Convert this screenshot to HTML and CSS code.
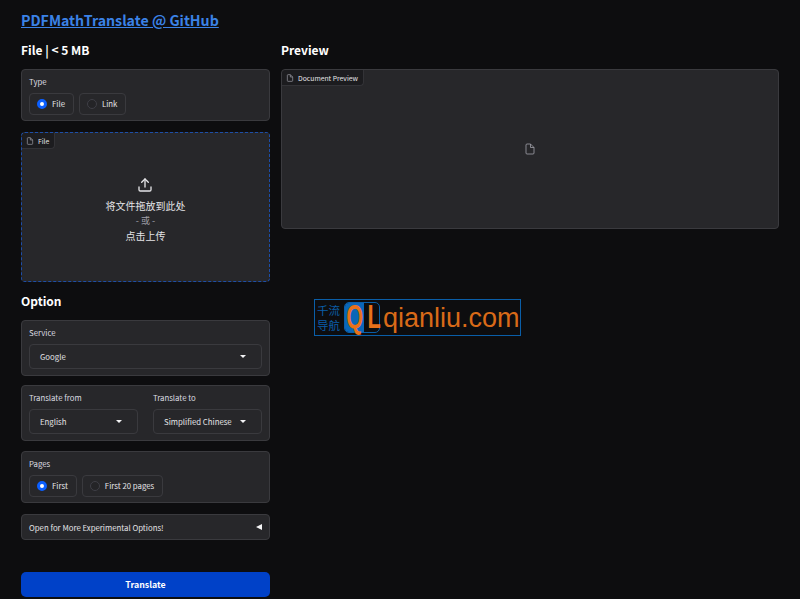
FILE: index.html
```html
<!DOCTYPE html>
<html lang="en">
<head>
<meta charset="utf-8">
<title>PDFMathTranslate</title>
<link rel="stylesheet" href="styles.css">
</head>
<body>
<main class="app">
  <h1 class="title"><a href="#">PDFMathTranslate @ GitHub</a></h1>
  <div class="columns">
    <section class="left">
      <h2 class="heading">File | &lt; 5 MB</h2>
      <div class="panel">
        <div class="label">Type</div>
        <div class="radios">
          <div class="radio"><span class="dot on"></span>File</div>
          <div class="radio"><span class="dot"></span>Link</div>
        </div>
      </div>
      <div class="drop">
        <div class="tag"><svg class="file-icon" viewBox="0 0 24 24"><path d="M13 2H6a2 2 0 0 0-2 2v16a2 2 0 0 0 2 2h12a2 2 0 0 0 2-2V9z"/><path d="M13 2v7h7"/></svg>File</div>
        <svg class="upload" viewBox="0 0 24 24"><path d="M21 15v4a2 2 0 0 1-2 2H5a2 2 0 0 1-2-2v-4"/><path d="M17 8l-5-5-5 5"/><path d="M12 3v12"/></svg>
        <div class="drop-line">将文件拖放到此处</div>
        <div class="drop-or">- 或 -</div>
        <div class="drop-line">点击上传</div>
      </div>
      <h2 class="heading option">Option</h2>
      <div class="panel select-panel tight">
        <div class="label">Service</div>
        <div class="select"><span>Google</span><i class="caret"></i></div>
      </div>
      <div class="panel select-panel two">
        <div class="field">
          <div class="label">Translate from</div>
          <div class="select"><span>English</span><i class="caret"></i></div>
        </div>
        <div class="field">
          <div class="label">Translate to</div>
          <div class="select"><span>Simplified Chinese</span><i class="caret"></i></div>
        </div>
      </div>
      <div class="panel">
        <div class="label">Pages</div>
        <div class="radios">
          <div class="radio"><span class="dot on"></span>First</div>
          <div class="radio"><span class="dot"></span>First 20 pages</div>
        </div>
      </div>
      <div class="accordion"><span>Open for More Experimental Options!</span><span class="arrow"></span></div>
      <button class="translate">Translate</button>
    </section>
    <section class="right">
      <h2 class="heading">Preview</h2>
      <div class="preview">
        <div class="tag"><svg class="file-icon" viewBox="0 0 24 24"><path d="M13 2H6a2 2 0 0 0-2 2v16a2 2 0 0 0 2 2h12a2 2 0 0 0 2-2V9z"/><path d="M13 2v7h7"/></svg>Document Preview</div>
        <svg class="preview-icon" viewBox="0 0 24 24"><path d="M13 2H6a2 2 0 0 0-2 2v16a2 2 0 0 0 2 2h12a2 2 0 0 0 2-2V9z"/><path d="M13 2v7h7"/></svg>
      </div>
    </section>
  </div>
</main>
<div class="watermark">
  <div class="wm-cn">千流<br>导航</div>
  <div class="wm-badge"><span class="wm-q"><b class="wm-glyph">Q</b></span><span class="wm-l"><b class="wm-glyph">L</b></span></div>
  <div class="wm-text">qianliu.com</div>
</div>
</body>
</html>
```
FILE: styles.css
```css
* { box-sizing: border-box; }
html, body { margin: 0; height: 599px; overflow: hidden; }
body {
  background: #0d0d0f;
  color: #f3f4f6;
  font-family: "Noto Sans CJK SC", "Noto Sans", sans-serif;
  font-size: 8px;
  position: relative;
}
.app { padding: 10px 21px 0; }
.title { margin: 0; font-size: 14.2px; line-height: 20px; font-weight: 700; }
.title a { color: #3b82e6; text-decoration: underline; }
.columns { display: grid; grid-template-columns: 249px 498px; gap: 11px; margin-top: 10px; }
.heading { margin: 0 0 10px; font-size: 12px; line-height: 19px; font-weight: 700; color: #fff; }
.heading.option { margin: 9px 0 10px; }
.panel {
  background: #27272a;
  border: 1px solid #3a3a3e;
  border-radius: 4px;
  padding: 5.5px 7px 5.5px;
  margin-bottom: 10px;
}
.label { font-size: 7.8px; line-height: 12px; color: #dcdce0; margin-bottom: 5px; }
.radios { display: flex; gap: 5px; }
.radio {
  display: flex;
  align-items: center;
  gap: 5px;
  height: 22px;
  padding: 0 8px 0 7px;
  border: 1px solid #3a3a3e;
  border-radius: 4px;
  font-size: 7.8px;
  color: #e4e4e7;
}
.dot { width: 10px; height: 10px; border-radius: 50%; background: #242427; border: 1px solid #3f3f46; flex: none; }
.dot.on { background: #fff; border: 3px solid #0b5fff; }
.drop, .preview {
  position: relative;
  background: #27272a;
  border-radius: 4px;
  display: flex;
  flex-direction: column;
  align-items: center;
}
.drop { height: 150px; margin-top: 11px; border: 1px dashed #1d4ea8; padding-top: 44px; }
.preview { height: 160px; border: 1px solid #3a3a3e; justify-content: center; }
.tag {
  position: absolute;
  top: 0; left: 0;
  display: flex;
  align-items: center;
  gap: 4px;
  height: 16px;
  padding: 0 5px 0 4px;
  background: #1c1c1f;
  border: 1px solid #333337;
  border-width: 0 1px 1px 0;
  border-radius: 4px 0 4px 0;
  font-size: 6.8px;
  color: #e4e4e7;
}
.file-icon { width: 8px; height: 8px; fill: none; stroke: #a1a1aa; stroke-width: 2; }
.upload { width: 16px; height: 16px; fill: none; stroke: #e4e4e7; stroke-width: 2; stroke-linecap: round; stroke-linejoin: round; margin: 0 0 4.5px -1px; }
.drop-line { font-size: 10px; line-height: 15px; color: #e4e4e7; }
.drop-or { font-size: 9px; line-height: 15px; color: #a1a1aa; }
.preview-icon { width: 12px; height: 12px; fill: none; stroke: #a1a1aa; stroke-width: 1.6; }
.select-panel { padding-bottom: 6.5px; }
.tight { margin-bottom: 9px; }
.select {
  display: flex;
  align-items: center;
  justify-content: space-between;
  height: 25px;
  padding: 0 15px 0 10px;
  border: 1px solid #3a3a3e;
  border-radius: 4px;
  font-size: 7.8px;
  color: #e4e4e7;
  white-space: nowrap;
}
.caret { width: 0; height: 0; border: 3px solid transparent; border-top: 3px solid #f4f4f5; border-bottom: 0; }
.two { display: grid; grid-template-columns: 1fr 1fr; gap: 15px; }
.accordion {
  display: flex;
  align-items: center;
  justify-content: space-between;
  height: 26px;
  margin-top: 11px;
  padding: 0 7px;
  background: #27272a;
  border: 1px solid #3a3a3e;
  border-radius: 4px;
  font-size: 7.8px;
  color: #e4e4e7;
}
.arrow { width: 0; height: 0; border: 3px solid transparent; border-right: 6px solid #f4f4f5; border-left: 0; }
.translate {
  display: block;
  width: 100%;
  height: 25px;
  margin-top: 32px;
  background: #0041c8;
  border: 0;
  border-radius: 5px;
  font: 700 8.8px "Noto Sans CJK SC", sans-serif;
  color: #fff;
}
.watermark {
  position: absolute;
  left: 314px;
  top: 299px;
  width: 207px;
  height: 37px;
  display: flex;
  align-items: center;
  border: 1px solid #0a5ea8;
  padding-left: 2px;
}
.wm-cn { width: 27px; font-size: 11.5px; line-height: 15px; color: #0a5ea8; }
.wm-badge { display: flex; flex: none; width: 36px; height: 31px; border: 1px solid #0a5ea8; border-radius: 5px; font: 700 33px/28px "Liberation Sans", sans-serif; color: #e8711a; }
.wm-q { display: flex; justify-content: center; width: 19px; background: #0a66b8; border-radius: 4px 0 0 4px; }
.wm-l { display: flex; justify-content: center; flex: 1; }
.wm-glyph { display: block; font-weight: 700; transform: scaleX(.66); }
.wm-text { margin-left: 3px; font: 27px/30px "Liberation Sans", sans-serif; color: #d96a18; white-space: nowrap; }
```
